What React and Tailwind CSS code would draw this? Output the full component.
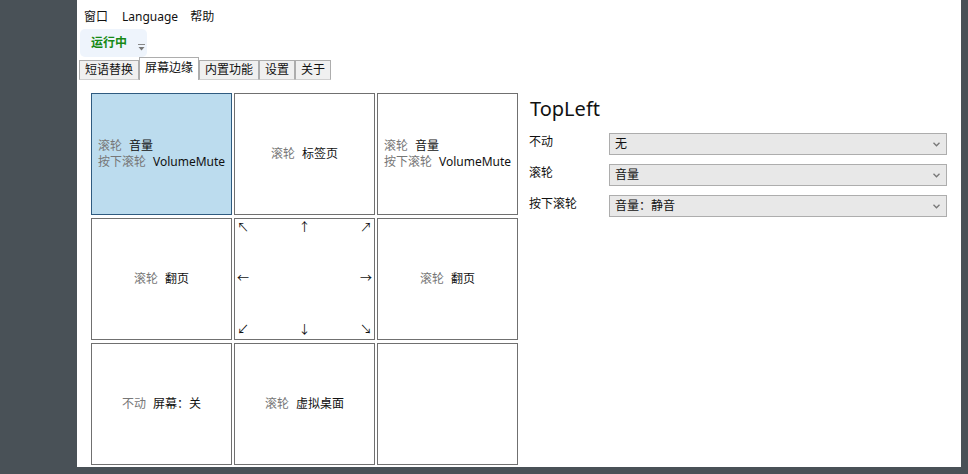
import React from 'react';

const font = { fontFamily: '"Noto Sans", "Noto Sans CJK SC", sans-serif' };

function Cell({ lines, active, children }) {
  return (
    <div className={`h-[122px] w-[141px] border flex items-center justify-center ${active ? 'bg-[#bcdcee] border-[#2f5b80]' : 'bg-white border-[#707070]'}`}>
      {children || (
        <div className="text-left text-[12px] leading-[16px] whitespace-nowrap">
          {lines.map((l, i) => (
            <div key={i}>
              <span className="text-[#777]">{l[0]}</span>
              <span className="ml-[7px] text-[#111]">{l[1]}</span>
            </div>
          ))}
        </div>
      )}
    </div>
  );
}

function Arrows() {
  const row = 'flex justify-between items-center';
  return (
    <div className="w-full h-full flex flex-col justify-between px-[2px] pt-[1px] pb-[1px] text-[12px] leading-[16px] text-[#111]">
      <div className={row}><span>↖</span><span>↑</span><span>↗</span></div>
      <div className={row}><span>←</span><span>→</span></div>
      <div className={row}><span>↙</span><span>↓</span><span>↘</span></div>
    </div>
  );
}

function Select({ value }) {
  return (
    <div className="h-[22px] w-[338px] bg-[#e8e8e8] border border-[#adadad] flex items-center justify-between pl-[5px] pr-[6px] text-[12px] text-[#111]">
      <span>{value}</span>
      <svg width="7" height="5" viewBox="0 0 7 5"><path d="M0.5 0.8 L3.5 3.8 L6.5 0.8" stroke="#777" strokeWidth="1.3" fill="none" /></svg>
    </div>
  );
}

export default function App() {
  const tabs = ['短语替换', '屏幕边缘', '内置功能', '设置', '关于'];
  const fields = [['不动', '无'], ['滚轮', '音量'], ['按下滚轮', '音量：静音']];
  return (
    <div className="w-[968px] h-[474px] bg-[#495157] flex pl-[77px] pr-[7px] pb-[7px]" style={font}>
      <div className="flex-1 bg-white flex flex-col">
        {/* Menu */}
        <div className="h-[28px] flex items-center pl-[1px] pt-[5px] text-[12px] text-[#111]">
          <span className="px-[6px]">窗口</span>
          <span className="px-[6px] ml-[2px]">Language</span>
          <span className="px-[6px]">帮助</span>
        </div>
        {/* Status button */}
        <div className="ml-[3px] mt-[1px] h-[28px] w-[67px] bg-[#eef4fc] rounded-[5px] relative flex items-center pl-[11px]">
          <span className="text-[12px] font-semibold text-[#168a16]">运行中</span>
          <svg className="absolute left-[58px] top-[15px]" width="7" height="8" viewBox="0 0 7 8">
            <rect x="0" y="0" width="7" height="1" fill="#888" />
            <path d="M0.5 3 L6.5 3 L3.5 6.5 Z" fill="#777" />
          </svg>
        </div>
        {/* Tabs */}
        <div className="flex items-end ml-[2px] h-[23px]">
          {tabs.map((t, i) => (
            <div
              key={t}
              className={`text-[12px] text-[#111] border border-[#adadad] px-[5px] flex items-center ${i === 1 ? 'bg-white h-[23px] border-b-0 z-10 pb-[2px]' : 'bg-[#f0f0f0] h-[20px] border-b-[#d0d0d0]'}`}
            >
              {t}
            </div>
          ))}
        </div>
        {/* Content */}
        <div className="flex pl-[14px] pt-[13px] pr-[14px]">
          <div className="grid grid-cols-3 gap-x-[2px] gap-y-[3px]">
            <Cell active lines={[['滚轮', '音量'], ['按下滚轮', 'VolumeMute']]} />
            <Cell lines={[['滚轮', '标签页']]} />
            <Cell lines={[['滚轮', '音量'], ['按下滚轮', 'VolumeMute']]} />
            <Cell lines={[['滚轮', '翻页']]} />
            <Cell><Arrows /></Cell>
            <Cell lines={[['滚轮', '翻页']]} />
            <Cell lines={[['不动', '屏幕：关']]} />
            <Cell lines={[['滚轮', '虚拟桌面']]} />
            <Cell lines={[]} />
          </div>
          <div className="ml-[11px] flex-1">
            <div className="text-[20px] leading-[32px] text-[#111] pl-[1px]">TopLeft</div>
            <div className="mt-[8px] flex flex-col gap-[9px]">
              {fields.map(([l, v]) => (
                <div key={l} className="flex">
                  <div className="w-[80px] text-[12px] leading-[18px] text-[#111]">{l}</div>
                  <Select value={v} />
                </div>
              ))}
            </div>
          </div>
        </div>
      </div>
    </div>
  );
}
